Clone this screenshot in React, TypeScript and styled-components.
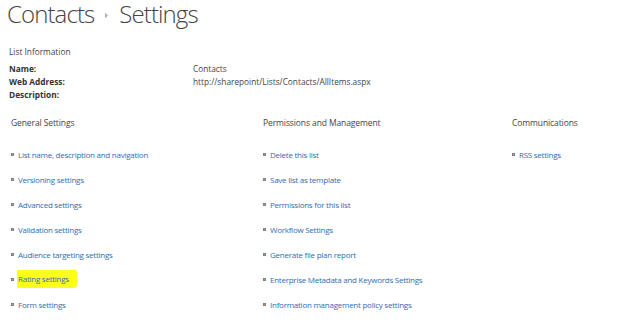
import React from "react";
import styled, { createGlobalStyle } from "styled-components";

const Global = createGlobalStyle`
  html, body { margin: 0; padding: 0; background: #fff; }
  body { font-family: "Open Sans", "Noto Sans", sans-serif; color: #444; }
`;

const Page = styled.div`
  width: 624px;
  height: 331px;
  overflow: hidden;
  box-sizing: border-box;
  padding-left: 7px;
`;

const Title = styled.h1`
  margin: -2px 0 0;
  font-family: "Open Sans", sans-serif;
  font-weight: 300;
  font-size: 24px;
  line-height: 32px;
  color: #444;
  display: flex;
  align-items: center;
  gap: 10px;
  letter-spacing: -0.9px;
`;

const Sep = styled.svg`
  width: 5px;
  height: 7px;
  margin-top: 2px;
`;

const Info = styled.section`
  margin-top: 15px;
  padding-left: 2px;
  font-size: 8.3px;
`;

const Caption = styled.div`
  line-height: 13px;
  color: #444;
  margin-bottom: 4px;
`;

const InfoGrid = styled.div`
  display: grid;
  grid-template-columns: 184px auto;
  line-height: 13px;
`;

const Label = styled.div`
  font-weight: 700;
  color: #333;
`;

const Value = styled.div`
  color: #444;
`;

const Columns = styled.div`
  margin-top: 15px;
  padding-left: 4px;
  display: grid;
  grid-template-columns: 252px 249px auto;
`;

const Column = styled.div`
  display: flex;
  flex-direction: column;
`;

const Heading = styled.div`
  font-size: 8.5px;
  line-height: 13px;
  color: #444;
  margin-bottom: 19px;
  letter-spacing: -0.1px;
`;

const LinkList = styled.ul`
  list-style: none;
  margin: 0;
  padding: 0;
`;

const Item = styled.li`
  height: 25px;
  display: flex;
  align-items: flex-start;
  font-size: 8px;
  line-height: 13px;
  letter-spacing: -0.25px;
`;

const Bullet = styled.span`
  width: 3px;
  height: 3px;
  margin: 5px 4px 0 0;
  background: #9a9a9a;
  box-shadow: inset 0 0 0 0.5px #777;
  flex: none;
`;

const Link = styled.a<{ $marked?: boolean }>`
  color: #2f6db5;
  text-decoration: none;
  ${(p) =>
    p.$marked &&
    `background: #ffff1e;
     padding: 2px 8px 3px 1px;
     margin: -3px 0 0 -1px;
     border-radius: 1px 2px 3px 1px;`}
`;

type Col = { title: string; links: string[] };

const cols: Col[] = [
  {
    title: "General Settings",
    links: [
      "List name, description and navigation",
      "Versioning settings",
      "Advanced settings",
      "Validation settings",
      "Audience targeting settings",
      "Rating settings",
      "Form settings",
    ],
  },
  {
    title: "Permissions and Management",
    links: [
      "Delete this list",
      "Save list as template",
      "Permissions for this list",
      "Workflow Settings",
      "Generate file plan report",
      "Enterprise Metadata and Keywords Settings",
      "Information management policy settings",
    ],
  },
  { title: "Communications", links: ["RSS settings"] },
];

export default function App() {
  return (
    <>
      <Global />
      <Page>
        <Title>
          <span>Contacts</span>
          <Sep viewBox="0 0 5 7">
            <path d="M1 0.5 L4 3.5 L1 6.5 Z" fill="#b5b5b5" />
          </Sep>
          <span>Settings</span>
        </Title>
        <Info>
          <Caption>List Information</Caption>
          <InfoGrid>
            <Label>Name:</Label>
            <Value>Contacts</Value>
            <Label>Web Address:</Label>
            <Value>http://sharepoint/Lists/Contacts/AllItems.aspx</Value>
            <Label>Description:</Label>
            <Value></Value>
          </InfoGrid>
        </Info>
        <Columns>
          {cols.map((c) => (
            <Column key={c.title}>
              <Heading>{c.title}</Heading>
              <LinkList>
                {c.links.map((l) => (
                  <Item key={l}>
                    <Bullet />
                    <Link href="#" $marked={l === "Rating settings"}>
                      {l}
                    </Link>
                  </Item>
                ))}
              </LinkList>
            </Column>
          ))}
        </Columns>
      </Page>
    </>
  );
}
